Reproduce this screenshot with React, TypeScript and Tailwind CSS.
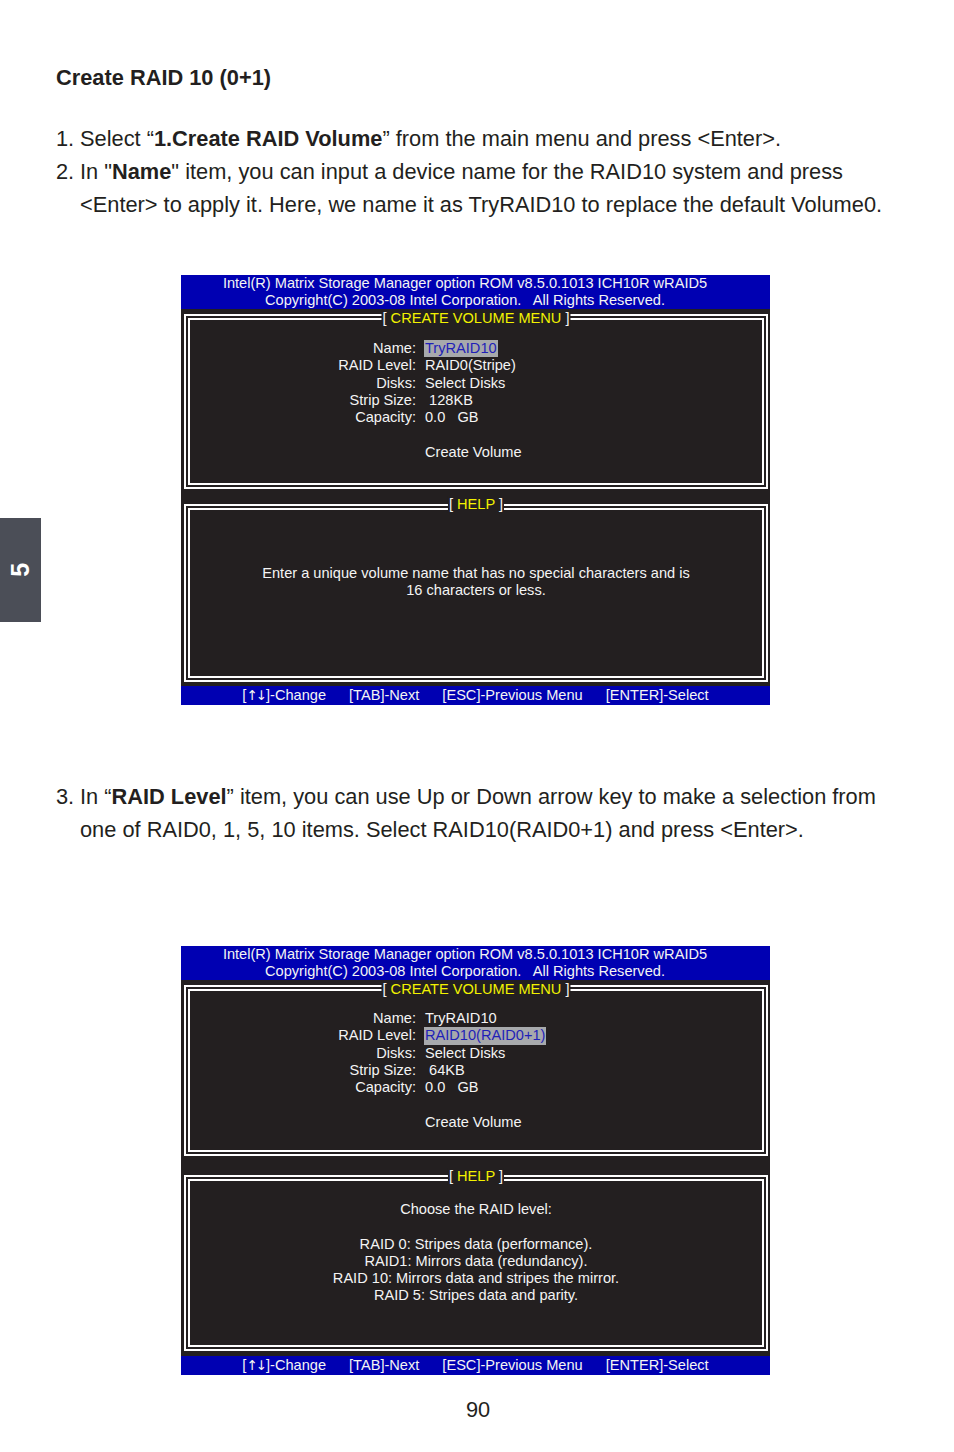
import React from 'react';

const font = { fontFamily: '"Liberation Sans", Arial, sans-serif' };

interface RowProps {
  label: string;
  value: string;
  selected?: boolean;
}

function Row({ label, value, selected }: RowProps) {
  return (
    <div className="flex">
      <span className="w-[226px] text-right">{label}</span>
      {selected ? (
        <span className="ml-[8px] whitespace-pre bg-[#a7a9ac] px-[1px] text-[#1f1fb8]">{value}</span>
      ) : (
        <span className="ml-[9px] whitespace-pre">{value}</span>
      )}
    </div>
  );
}

function Panel({
  title,
  className,
  titleTop,
  children,
}: {
  title: string;
  className: string;
  titleTop: string;
  children: React.ReactNode;
}) {
  return (
    <div className={`relative mx-[2px] ml-[3px] border-2 border-white p-[2px] ${className}`}>
      <div className="h-full border-2 border-white">{children}</div>
      <div className={`absolute left-1/2 -translate-x-1/2 bg-[#231f20] px-[1px] whitespace-pre ${titleTop}`}>
        <span>[ </span>
        <span className="text-[#f2f200]">{title}</span>
        <span> ]</span>
      </div>
    </div>
  );
}

interface ScreenProps {
  rows: RowProps[];
  help: string[];
  topH: string;
  topPad: string;
  midGap: string;
  helpH: string;
  helpPad: string;
  footGap: string;
  helpTitleTop: string;
}

function Screen(p: ScreenProps) {
  return (
    <div className="ml-[181px] w-[589px] bg-[#231f20] text-[14.6px] leading-[17.25px] text-[#f4f4f4]" style={font}>
      <div className="h-[34px] bg-[#0000b2] pr-[21px] text-center leading-[17px]">
        <div className="-mt-[2px]">Intel(R) Matrix Storage Manager option ROM v8.5.0.1013 ICH10R wRAID5</div>
        <div className="whitespace-pre">Copyright(C) 2003-08 Intel Corporation.   All Rights Reserved.</div>
      </div>
      <div className="h-[5px]" />
      <Panel title="CREATE VOLUME MENU" className={p.topH} titleTop="-top-[6px]">
        <div className={p.topPad}>
          {p.rows.map((r) => (
            <Row key={r.label} {...r} />
          ))}
          <div className="h-[17.25px]" />
          <div className="pl-[235px]">Create Volume</div>
        </div>
      </Panel>
      <div className={p.midGap} />
      <Panel title="HELP" className={p.helpH} titleTop={p.helpTitleTop}>
        <div className={`text-center ${p.helpPad}`}>
          {p.help.map((h, i) => (
            <div key={i} className="min-h-[17.25px]">
              {h}
            </div>
          ))}
        </div>
      </Panel>
      <div className={p.footGap} />
      <div className="flex h-[19px] items-center justify-center gap-[23px] bg-[#0000b2] leading-[19px]">
        <span>
          [<span className="text-[13.5px] tracking-[-2px]" style={{ fontFamily: '"DejaVu Sans", sans-serif' }}>↑↓</span>
          <span className="ml-[1px]">]-Change</span>
        </span>
        <span>[TAB]-Next</span>
        <span>[ESC]-Previous Menu</span>
        <span>[ENTER]-Select</span>
      </div>
    </div>
  );
}

export default function App() {
  return (
    <div className="relative min-h-[1452px] w-[954px] bg-white text-[#231f20]" style={font}>
      <div className="absolute left-0 top-[518px] flex h-[104px] w-[41px] items-center justify-center bg-[#4b4e57]">
        <span className="-rotate-90 text-[25px] font-bold text-white">5</span>
      </div>

      <div className="pl-[56px] pt-[66px] text-[21.8px]">
        <h2 className="text-[21.8px] font-bold leading-[24px]">Create RAID 10 (0+1)</h2>
        <div className="mt-[32px] leading-[33px]">
          <div className="flex">
            <span className="w-[24px]">1.</span>
            <span>
              Select “<b>1.Create RAID Volume</b>” from the main menu and press &lt;Enter&gt;.
            </span>
          </div>
          <div className="flex">
            <span className="w-[24px] shrink-0">2.</span>
            <span>
              In "<b>Name</b>" item, you can input a device name for the RAID10 system and press
              <br />
              &lt;Enter&gt; to apply it. Here, we name it as TryRAID10 to replace the default Volume0.
            </span>
          </div>
        </div>
      </div>

      <div className="mt-[56px]">
        <Screen
          rows={[
            { label: 'Name:', value: 'TryRAID10', selected: true },
            { label: 'RAID Level:', value: 'RAID0(Stripe)' },
            { label: 'Disks:', value: 'Select Disks' },
            { label: 'Strip Size:', value: ' 128KB' },
            { label: 'Capacity:', value: '0.0   GB' },
          ]}
          help={['Enter a unique volume name that has no special characters and is', '16 characters or less.']}
          topH="h-[175px]"
          topPad="pt-[20px]"
          midGap="h-[15px]"
          helpH="h-[178px]"
          helpPad="pt-[55px]"
          footGap="h-[4px]"
          helpTitleTop="-top-[10px]"
        />
      </div>

      <div className="mt-[75px] pl-[56px] text-[21.8px] leading-[33px]">
        <div className="flex">
          <span className="w-[24px] shrink-0">3.</span>
          <span>
            In “<b>RAID Level</b>” item, you can use Up or Down arrow key to make a selection from
            <br />
            one of RAID0, 1, 5, 10 items. Select RAID10(RAID0+1) and press &lt;Enter&gt;.
          </span>
        </div>
      </div>

      <div className="mt-[102px]">
        <Screen
          rows={[
            { label: 'Name:', value: 'TryRAID10' },
            { label: 'RAID Level:', value: 'RAID10(RAID0+1)', selected: true },
            { label: 'Disks:', value: 'Select Disks' },
            { label: 'Strip Size:', value: ' 64KB' },
            { label: 'Capacity:', value: '0.0   GB' },
          ]}
          help={[
            'Choose the RAID level:',
            '',
            'RAID 0: Stripes data (performance).',
            'RAID1: Mirrors data (redundancy).',
            'RAID 10: Mirrors data and stripes the mirror.',
            'RAID 5: Stripes data and parity.',
          ]}
          topH="h-[171px]"
          topPad="pt-[19px]"
          midGap="h-[19px]"
          helpH="h-[176px]"
          helpPad="pt-[20px]"
          footGap="h-[5px]"
          helpTitleTop="-top-[9px]"
        />
      </div>

      <div className="mt-[23px] pl-[2px] text-center text-[21.8px] leading-[24px]">90</div>
    </div>
  );
}
